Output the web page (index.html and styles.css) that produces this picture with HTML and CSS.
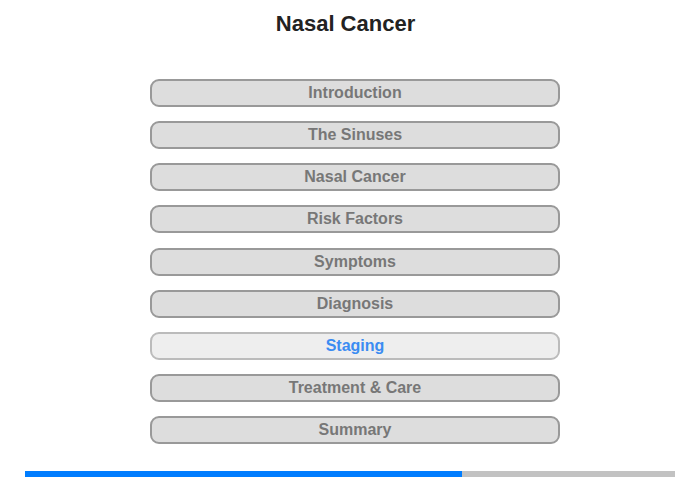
FILE: index.html
```html
<!DOCTYPE html>
<html>
<head>
<meta charset="utf-8">
<link rel="stylesheet" href="styles.css">
</head>
<body>
<div class="page">
  <h1 class="title">Nasal Cancer</h1>
  <nav class="menu">
    <div class="item">Introduction</div>
    <div class="item">The Sinuses</div>
    <div class="item">Nasal Cancer</div>
    <div class="item">Risk Factors</div>
    <div class="item">Symptoms</div>
    <div class="item">Diagnosis</div>
    <div class="item active">Staging</div>
    <div class="item">Treatment &amp; Care</div>
    <div class="item">Summary</div>
  </nav>
  <div class="progress"><div class="progress-fill" style="width:67.2%"></div></div>
</div>
</body>
</html>
```
FILE: styles.css
```css
html, body {
  margin: 0;
  padding: 0;
  background: #ffffff;
}
.page {
  width: 700px;
  height: 480px;
  font-family: "Liberation Sans", Arial, sans-serif;
  display: flex;
  flex-direction: column;
}
.title {
  margin: 11px 0 0 0;
  padding-right: 9px;
  font-size: 22px;
  line-height: 25px;
  font-weight: bold;
  color: #222222;
  text-align: center;
}
.menu {
  margin: 43px 0 0 150px;
  width: 410px;
  display: flex;
  flex-direction: column;
  gap: 14.125px;
}
.item {
  box-sizing: border-box;
  height: 28px;
  border: 2px solid #999999;
  border-radius: 9px;
  background: #dddddd;
  color: #777777;
  font-size: 16px;
  font-weight: bold;
  line-height: 23px;
  text-align: center;
}
.item.active {
  background: #eeeeee;
  border-color: #bbbbbb;
  color: #3b8cf2;
}
.progress {
  margin: 27px 0 0 25px;
  width: 650px;
  height: 6px;
  background: #c2c2c2;
  display: flex;
}
.progress-fill {
  height: 100%;
  background: #007dff;
}
```
